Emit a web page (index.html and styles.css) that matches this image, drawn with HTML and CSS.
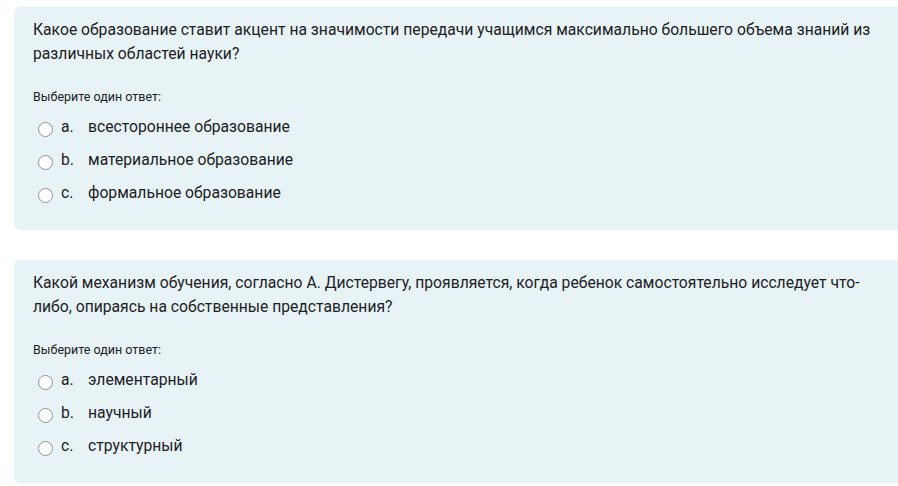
FILE: index.html
```html
<!DOCTYPE html>
<html lang="ru">
<head>
    <meta charset="UTF-8">
    <title>Тест</title>
    <link rel="stylesheet" href="styles.css">
</head>
<body>
    <div class="page">
        <div class="que">
            <div class="qtext">Какое образование ставит акцент на значимости передачи учащимся максимально большего объема знаний из различных областей науки?</div>
            <div class="prompt">Выберите один ответ:</div>
            <div class="answer">
                <label class="opt"><span class="radio"></span><span class="letter">a.</span><span>всестороннее образование</span></label>
                <label class="opt"><span class="radio"></span><span class="letter">b.</span><span>материальное образование</span></label>
                <label class="opt"><span class="radio"></span><span class="letter">c.</span><span>формальное образование</span></label>
            </div>
        </div>

        <div class="que">
            <div class="qtext">Какой механизм обучения, согласно А. Дистервегу, проявляется, когда ребенок самостоятельно исследует что-либо, опираясь на собственные представления?</div>
            <div class="prompt">Выберите один ответ:</div>
            <div class="answer">
                <label class="opt"><span class="radio"></span><span class="letter">a.</span><span>элементарный</span></label>
                <label class="opt"><span class="radio"></span><span class="letter">b.</span><span>научный</span></label>
                <label class="opt"><span class="radio"></span><span class="letter">c.</span><span>структурный</span></label>
            </div>
        </div>
    </div>
</body>
</html>
```

FILE: styles.css
```css
body {
    margin: 0;
    font-family: Roboto, "Noto Sans", sans-serif;
    color: #1d2125;
    background-color: #fff;
    overflow: hidden;
}
.page {
    padding: 7px 0 0 14px;
    width: 906px;
    display: flex;
    flex-direction: column;
    gap: 30px;
}
.que {
    background-color: #e7f3f5;
    border-radius: 6px;
    padding: 11px 35px 25px 19px;
}
.qtext {
    font-size: 15.7px;
    line-height: 24px;
}
.prompt {
    font-size: 12.5px;
    margin-top: 23px;
    margin-bottom: 11px;
}
.answer {
    display: flex;
    flex-direction: column;
    gap: 9px;
}
.opt {
    display: flex;
    align-items: center;
    font-size: 15.7px;
    line-height: 24px;
    padding-left: 5px;
}
.radio {
    width: 13px;
    height: 13px;
    border: 1px solid #8f959e;
    border-radius: 50%;
    background-color: #fff;
    margin-top: 4px;
    margin-right: 8px;
}
.letter {
    width: 27px;
}
```
